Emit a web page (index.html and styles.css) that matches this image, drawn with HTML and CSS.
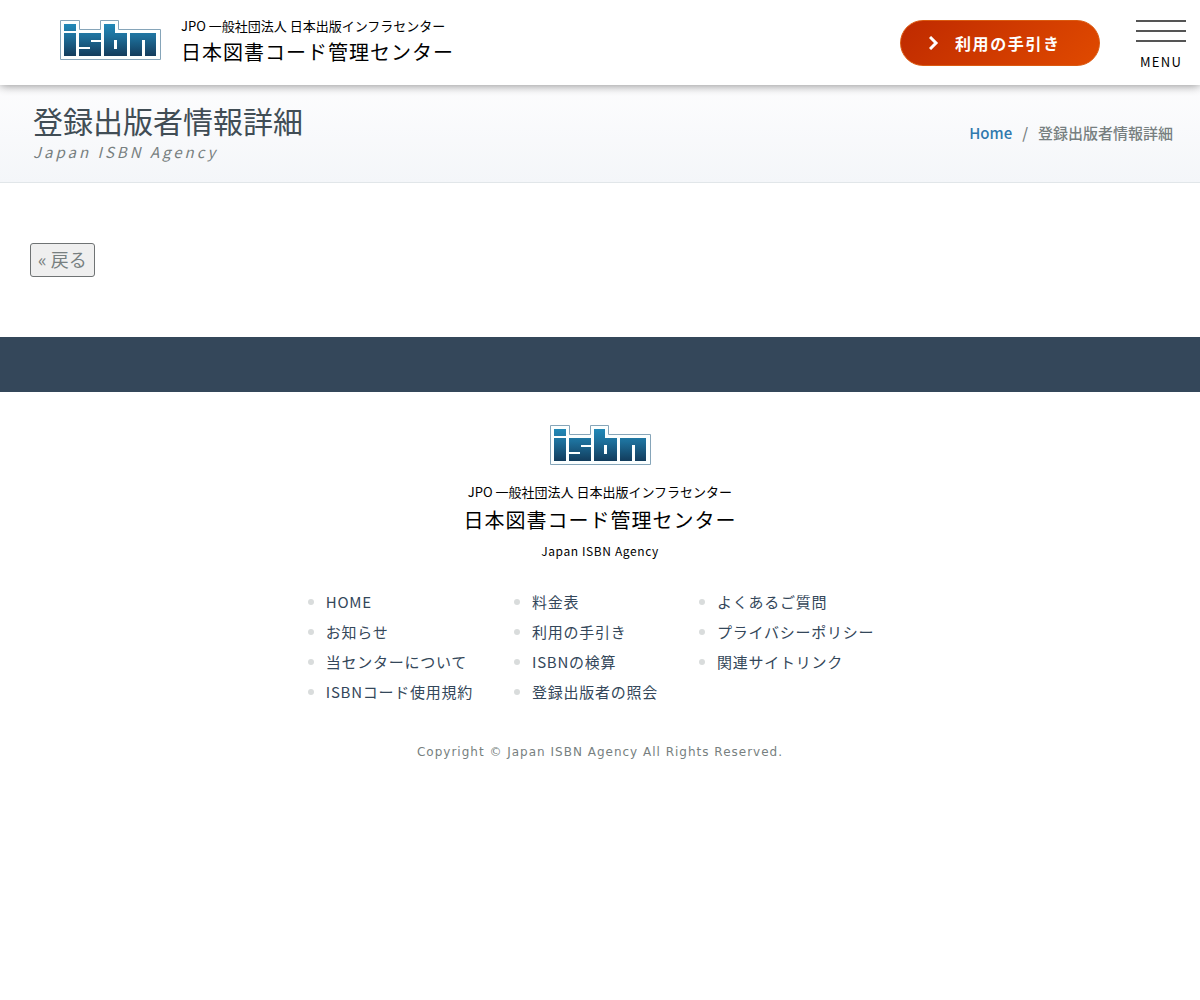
FILE: index.html
```
<!DOCTYPE html>
<html lang="ja">
<head>
    <meta charset="UTF-8">
    <meta name="viewport" content="width=device-width, initial-scale=1.0">
    <title>登録出版者情報詳細 | 日本図書コード管理センター</title>
    <link rel="stylesheet" href="styles.css">
</head>
<body>
    <header class="site-header">
        <a class="brand" href="#">
            <svg class="logo" viewBox="0 0 101 40" role="img" aria-label="isbn">
                <defs>
                    <linearGradient id="logo-fill" gradientUnits="userSpaceOnUse" x1="0" y1="4" x2="0" y2="36">
                        <stop offset="0" stop-color="#2089b8"/>
                        <stop offset="0.4" stop-color="#1d6f9a"/>
                        <stop offset="1" stop-color="#123c5c"/>
                    </linearGradient>
                </defs>
                <path class="logo-frame" d="M.5 .5H19.5V9.5H40.5V.5H58.5V9.5H100.5V39.5H.5Z"/>
                <path fill="url(#logo-fill)" fill-rule="evenodd" d="M4 4H16V11H4ZM4 13H16V36H4ZM19 13H41V20H31V22H41V36H19V29H30V27H19ZM44 4H55V13H67V36H44ZM54 20V29H57V20ZM70 13H96V36H85V20H82V36H70Z"/>
            </svg>
            <span class="brand-text">
                <span class="org">JPO 一般社団法人 日本出版インフラセンター</span>
                <span class="name">日本図書コード管理センター</span>
            </span>
        </a>
        <div class="header-nav">
            <a class="guide-btn" href="#">
                <svg class="chevron" viewBox="0 0 10 14" aria-hidden="true"><path d="M1 1L7 7L1 13"/></svg>
                利用の手引き
            </a>
            <button class="menu-btn" type="button">
                <span class="bar"></span>
                <span class="bar"></span>
                <span class="bar"></span>
                <span class="menu-label">MENU</span>
            </button>
        </div>
    </header>

    <div class="page-title">
        <div>
            <h1>登録出版者情報詳細</h1>
            <p class="subtitle">Japan ISBN Agency</p>
        </div>
        <ol class="breadcrumb">
            <li><a href="#">Home</a></li>
            <li>登録出版者情報詳細</li>
        </ol>
    </div>

    <main class="content">
        <button class="back-btn" type="button">« 戻る</button>
    </main>

    <div class="band"></div>

    <footer class="site-footer">
        <svg class="logo" viewBox="0 0 101 40" role="img" aria-label="isbn">
            <path class="logo-frame" d="M.5 .5H19.5V9.5H40.5V.5H58.5V9.5H100.5V39.5H.5Z"/>
            <path fill="url(#logo-fill)" fill-rule="evenodd" d="M4 4H16V11H4ZM4 13H16V36H4ZM19 13H41V20H31V22H41V36H19V29H30V27H19ZM44 4H55V13H67V36H44ZM54 20V29H57V20ZM70 13H96V36H85V20H82V36H70Z"/>
        </svg>
        <p class="org">JPO 一般社団法人 日本出版インフラセンター</p>
        <p class="name">日本図書コード管理センター</p>
        <p class="name-en">Japan ISBN Agency</p>
        <nav class="footer-nav">
            <ul>
                <li><a href="#">HOME</a></li>
                <li><a href="#">お知らせ</a></li>
                <li><a href="#">当センターについて</a></li>
                <li><a href="#">ISBNコード使用規約</a></li>
            </ul>
            <ul>
                <li><a href="#">料金表</a></li>
                <li><a href="#">利用の手引き</a></li>
                <li><a href="#">ISBNの検算</a></li>
                <li><a href="#">登録出版者の照会</a></li>
            </ul>
            <ul>
                <li><a href="#">よくあるご質問</a></li>
                <li><a href="#">プライバシーポリシー</a></li>
                <li><a href="#">関連サイトリンク</a></li>
            </ul>
        </nav>
        <p class="copyright">Copyright © Japan ISBN Agency All Rights Reserved.</p>
    </footer>
</body>
</html>
```
FILE: styles.css
```
* {
    box-sizing: border-box;
}

body {
    margin: 0;
    background-color: #fff;
    color: #777f80;
    font-family: "Noto Sans CJK JP", sans-serif;
    font-size: 15px;
    line-height: 24px;
}

h1, p, ul, ol {
    margin: 0;
    padding: 0;
}

ul, ol {
    list-style: none;
}

a {
    text-decoration: none;
}

button {
    font-family: inherit;
    cursor: pointer;
}

.logo {
    display: block;
    width: 101px;
    height: 40px;
}

.logo-frame {
    fill: #fbffff;
    stroke: #86a5b9;
}

.org {
    display: block;
    color: #000;
    font-size: 13px;
    line-height: 24px;
}

.name {
    display: block;
    color: #000;
    font-size: 20px;
    line-height: 28px;
    letter-spacing: 0.05em;
}

/* header */
.site-header {
    position: relative;
    display: flex;
    justify-content: space-between;
    align-items: flex-start;
    height: 85px;
    padding: 0 14px 0 60px;
    background-color: #fff;
    box-shadow: 0 0 10px rgba(0, 0, 0, 0.5);
}

.brand {
    display: flex;
    gap: 20px;
    padding-top: 14px;
}

.brand .logo {
    margin-top: 6px;
}

.header-nav {
    display: flex;
    align-items: flex-start;
    gap: 36px;
    padding-top: 20px;
}

.guide-btn {
    display: flex;
    align-items: center;
    gap: 16px;
    width: 200px;
    height: 46px;
    padding-left: 28px;
    border: 1px solid #db5a10;
    border-radius: 23px;
    background: linear-gradient(135deg, #bf2a00, #e04a00);
    color: #fff;
    font-size: 16px;
    font-weight: 700;
    letter-spacing: 0.1em;
}

.chevron {
    width: 10px;
    height: 14px;
    fill: none;
    stroke: #fff;
    stroke-width: 3;
}

.menu-btn {
    display: flex;
    flex-direction: column;
    gap: 8px;
    width: 50px;
    padding: 0;
    border: 0;
    background: none;
}

.bar {
    width: 100%;
    height: 2px;
    background-color: #555;
}

.menu-label {
    align-self: center;
    color: #000;
    font-size: 13px;
    line-height: 24px;
    letter-spacing: 0.1em;
}

/* page title */
.page-title {
    display: flex;
    justify-content: space-between;
    align-items: flex-start;
    padding: 17px 27px 18px 33px;
    border-bottom: 1px solid #e1e6e9;
    background: linear-gradient(#fdfdfe, #f4f6f9);
}

h1 {
    color: #414d55;
    font-size: 30px;
    font-weight: 400;
    line-height: 36px;
}

.subtitle {
    margin-top: 2px;
    font-style: italic;
    letter-spacing: 3px;
}

.breadcrumb {
    display: flex;
    padding-top: 19px;
    font-weight: 500;
}

.breadcrumb li + li::before {
    content: "/";
    padding: 0 10px;
}

.breadcrumb a {
    color: #3079ae;
}

/* content */
.content {
    padding: 60px 30px;
}

.back-btn {
    display: block;
    height: 34px;
    padding: 0 7px 3px;
    border: 1px solid #6f7374;
    border-radius: 3px;
    background-color: #efefef;
    color: #777f80;
    font-size: 18px;
    line-height: 28px;
}

.band {
    height: 55px;
    background-color: #34475a;
}

/* footer */
.site-footer {
    display: flex;
    flex-direction: column;
    align-items: center;
    padding: 33px 20px;
}

.site-footer .org {
    margin-top: 15px;
}

.site-footer .name {
    margin-top: 2px;
}

.name-en {
    margin-top: 5px;
    color: #000;
    font-size: 12px;
    letter-spacing: 0.05em;
}

.footer-nav {
    display: flex;
    gap: 41px;
    margin-top: 24px;
    padding-right: 18px;
}

.footer-nav li {
    display: flex;
    align-items: center;
    gap: 12px;
    line-height: 30px;
}

.footer-nav li::before {
    content: "";
    width: 6px;
    height: 6px;
    border-radius: 50%;
    background-color: #d9dcdc;
}

.footer-nav a {
    color: #34475a;
    letter-spacing: 0.05em;
}

.copyright {
    margin-top: 33px;
    font-family: "DejaVu Sans", sans-serif;
    font-size: 12px;
    letter-spacing: 1px;
}
```
